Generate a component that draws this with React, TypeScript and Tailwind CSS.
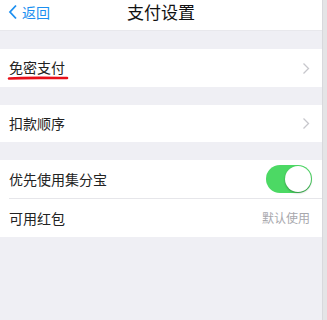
import React, { useState } from 'react';

function Chevron() {
  return (
    <svg width="8" height="13" viewBox="0 0 8 13" className="shrink-0">
      <path d="M1.5 1.5 L6.5 6.5 L1.5 11.5" fill="none" stroke="#c7c7cc" strokeWidth="1.3" />
    </svg>
  );
}

function Toggle({ on, onChange }: { on: boolean; onChange: () => void }) {
  return (
    <button
      onClick={onChange}
      className={`relative w-[46px] h-[28px] rounded-full shrink-0 ${on ? 'bg-[#4cd964]' : 'bg-[#e5e5ea]'}`}
    >
      <span
        className={`absolute top-[1px] w-[26px] h-[26px] rounded-full bg-white shadow-[0_1px_2px_rgba(0,0,0,0.35)] ${on ? 'left-[19px]' : 'left-[1px]'}`}
      />
    </button>
  );
}

export default function App() {
  const [useJifen, setUseJifen] = useState(true);

  return (
    <div className="w-[327px] h-[320px] flex bg-[#efeff4] overflow-hidden font-['Noto_Sans_CJK_SC',sans-serif] text-[#222] leading-none">
      <div className="w-[322px] flex flex-col">
        {/* nav bar */}
        <div className="h-[31px] bg-white relative flex items-center pb-[7px] border-b border-[#e8e8ec]">
          <div className="flex items-center pl-[8px] text-[#1b8ff0] text-[14px]">
            <svg width="10" height="16" viewBox="0 0 10 16" className="mr-[4px]">
              <path d="M8 1.5 L2 8 L8 14.5" fill="none" stroke="#1b8ff0" strokeWidth="1.8" />
            </svg>
            返回
          </div>
          <div className="absolute left-0 right-0 top-0 h-full flex items-center justify-center pb-[8px] text-[17px] text-[#111] pointer-events-none">
            支付设置
          </div>
        </div>

        <div className="h-[18px]" />

        <div className="h-[38px] bg-white flex items-center justify-between pl-[9px] pr-[12px]">
          <span className="relative text-[14px] -mt-[2px]">
            免密支付
            <svg width="62" height="6" viewBox="0 0 62 6" className="absolute left-[-2px] top-[15px]">
              <path d="M2 3.5 C15 2.5, 35 2.8, 60 3" fill="none" stroke="#e8101a" strokeWidth="2.6" strokeLinecap="round" />
            </svg>
          </span>
          <Chevron />
        </div>

        <div className="h-[18px]" />

        <div className="h-[37px] bg-white flex items-center justify-between pl-[9px] pr-[12px]">
          <span className="text-[14px] -mt-[1px]">扣款顺序</span>
          <Chevron />
        </div>

        <div className="h-[18px]" />

        <div className="bg-white">
          <div className="h-[38px] flex items-center justify-between pl-[9px] pr-[10px]">
            <span className="text-[14px]">优先使用集分宝</span>
            <Toggle on={useJifen} onChange={() => setUseJifen(!useJifen)} />
          </div>
          <div className="ml-[9px] h-px bg-[#e6e6ea]" />
          <div className="h-[38px] flex items-center justify-between pl-[9px] pr-[12px]">
            <span className="text-[14px]">可用红包</span>
            <span className="text-[12px] text-[#a8a8ad]">默认使用</span>
          </div>
        </div>
      </div>
      <div className="w-[5px] bg-[#e4e4e6] border-l border-[#d8d8dc]" />
    </div>
  );
}
